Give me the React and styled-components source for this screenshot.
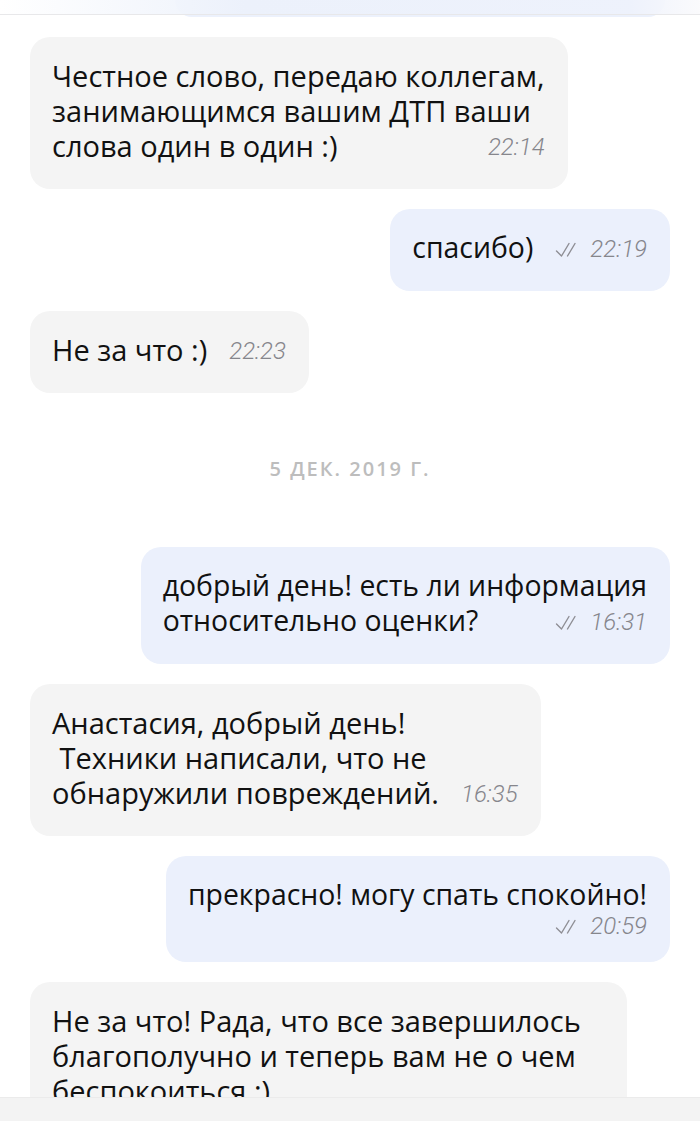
import React from 'react';
import styled, { createGlobalStyle } from 'styled-components';

const GlobalStyle = createGlobalStyle`
  html, body {
    margin: 0;
    padding: 0;
    background: #ffffff;
  }
  body {
    font-family: "Open Sans", "Noto Sans", "Liberation Sans", sans-serif;
    color: #111111;
    -webkit-font-smoothing: antialiased;
  }
`;

// last message is cut off by the input bar, its time isn't visible
const messages = [
  { id: 1, out: false, lines: ['Честное слово, передаю коллегам,', 'занимающимся вашим ДТП ваши', 'слова один в один :)'], time: '22:14' },
  { id: 2, out: true, lines: ['спасибо)'], time: '22:19' },
  { id: 3, out: false, lines: ['Не за что :)'], time: '22:23' },
  { id: 'd1', date: '5 дек. 2019 г.' },
  { id: 4, out: true, lines: ['добрый день! есть ли информация', 'относительно оценки?'], time: '16:31' },
  { id: 5, out: false, lines: ['Анастасия, добрый день!', '\u00a0Техники написали, что не', 'обнаружили повреждений.'], time: '16:35' },
  { id: 6, out: true, lines: ['прекрасно! могу спать спокойно!'], time: '20:59', timeBelow: true },
  { id: 7, out: false, lines: ['Не за что! Рада, что все завершилось', 'благополучно и теперь вам не о чем', 'беспокоиться :)'], time: null, wide: true },
];

const ReadMark = () => (
  <svg width="26" height="15" viewBox="0 0 26 15" fill="none" stroke="#8e8e94" strokeWidth="1.4" strokeLinecap="round" strokeLinejoin="round">
    <path d="M1.5 9 L6.5 14 L14 1.5" />
    <path d="M12.5 14 L20 1.5" />
  </svg>
);

const Bubble = ({ msg }) => {
  const last = msg.lines.length - 1;
  return (
    <Row $out={msg.out}>
      <BubbleBox $out={msg.out} $wide={msg.wide}>
        {msg.lines.map((line, i) => (
          <Line key={i}>
            {line}
            {i === last && msg.time && !msg.timeBelow && (
              <Meta>
                {msg.out && <ReadMark />}
                <Time>{msg.time}</Time>
              </Meta>
            )}
          </Line>
        ))}
        {msg.time && msg.timeBelow && (
          <MetaLine>
            {msg.out && <ReadMark />}
            <Time>{msg.time}</Time>
          </MetaLine>
        )}
      </BubbleBox>
    </Row>
  );
};

export default function App() {
  return (
    <>
      <GlobalStyle />
      <Screen>
        <TopBar />
        <Feed>
          <Row $out>
            <CutBubble />
          </Row>
          {messages.map((m) =>
            m.date ? <DateLabel key={m.id}>{m.date}</DateLabel> : <Bubble key={m.id} msg={m} />
          )}
        </Feed>
        <BottomBar />
      </Screen>
    </>
  );
}

const Screen = styled.div`
  position: relative;
  width: 700px;
  height: 1121px;
  overflow: hidden;
  background: #ffffff;
`;

const TopBar = styled.div`
  position: absolute;
  top: 0;
  left: 0;
  right: 0;
  height: 14px;
  background: linear-gradient(90deg, rgba(255, 255, 255, 0.95) 0%, rgba(236, 241, 251, 0.9) 35%, rgba(238, 242, 252, 0.9) 90%, rgba(250, 250, 252, 0.95) 100%);
  border-bottom: 1px solid #e8e8ea;
  z-index: 2;
`;

const BottomBar = styled.div`
  position: absolute;
  left: 0;
  right: 0;
  bottom: 0;
  height: 23px;
  background: #f3f3f3;
  border-top: 1px solid #ebebeb;
  z-index: 2;
`;

const Feed = styled.div`
  display: flex;
  flex-direction: column;
  gap: 20px;
  padding: 0 30px;
`;

const Row = styled.div`
  display: flex;
  justify-content: ${(p) => (p.$out ? 'flex-end' : 'flex-start')};
`;

const CutBubble = styled.div`
  width: 490px;
  height: 17px;
  margin-right: 5px;
  background: #ecf1fc;
  border-radius: 0 0 20px 20px;
`;

const BubbleBox = styled.div`
  background: ${(p) => (p.$out ? '#ebf0fc' : '#f4f4f4')};
  border-radius: 20px;
  padding: 21px ${(p) => (p.$wide ? '46px' : '23px')} 26px 22px;
  font-size: ${(p) => (p.$out ? '28.4px' : '29px')};
  line-height: 35px;
  letter-spacing: 0;
  color: #111111;
`;

const Line = styled.div`
  white-space: nowrap;
  height: 35px;
`;

const Meta = styled.span`
  float: right;
  display: inline-flex;
  align-items: center;
  gap: 9px;
  height: 35px;
  margin-left: 22px;
  padding-top: 3px;
  box-sizing: border-box;
`;

const MetaLine = styled.div`
  display: flex;
  justify-content: flex-end;
  align-items: center;
  gap: 9px;
  height: 28px;
  margin-bottom: -4px;
`;

const Time = styled.span`
  font-family: Roboto, "Open Sans", sans-serif;
  font-size: 24px;
  font-style: italic;
  font-weight: 300;
  color: #86868c;
  letter-spacing: 0;
  line-height: 1;
`;

const DateLabel = styled.div`
  text-align: center;
  font-family: "Open Sans", "Noto Sans", sans-serif;
  font-weight: 600;
  font-size: 20px;
  line-height: 24px;
  letter-spacing: 2px;
  text-transform: uppercase;
  color: #bdbdbd;
  padding: 44px 0 46px;
`;
